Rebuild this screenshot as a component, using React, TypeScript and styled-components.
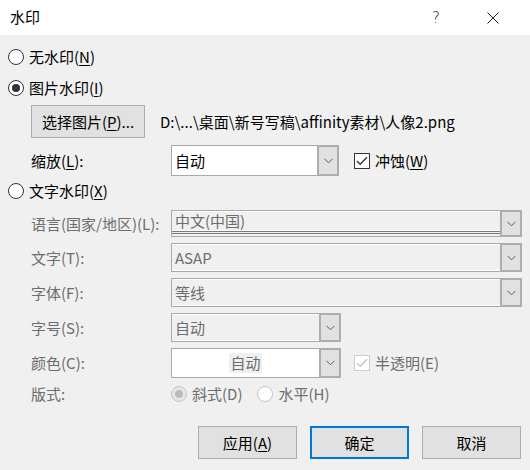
import React from 'react';
import styled, { createGlobalStyle, css } from 'styled-components';

const GlobalStyle = createGlobalStyle`
  html, body { margin: 0; padding: 0; background: #f0f0f0; }
  body {
    font-family: "Noto Sans CJK SC", "Noto Sans", sans-serif;
    font-size: 15px;
    color: #000;
  }
  * { box-sizing: border-box; }
  u { text-underline-offset: 2px; }
`;

const Dialog = styled.div`
  width: 530px;
  height: 470px;
  display: flex;
  flex-direction: column;
  background: #f0f0f0;
  overflow: hidden;
`;

const TitleBar = styled.div`
  height: 35px;
  background: #ffffff;
  display: flex;
  align-items: center;
  padding-left: 10px;
  padding-right: 14px;
  gap: 11px;
`;

const Title = styled.div`
  flex: 1;
  font-size: 15px;
  line-height: 20px;
  margin-top: -2px;
`;

const TitleButton = styled.div`
  width: 46px;
  height: 35px;
  display: flex;
  align-items: center;
  justify-content: center;
  font-family: "DejaVu Sans", sans-serif;
  font-weight: 300;
  font-size: 15px;
  color: #222;
`;

const Body = styled.div`
  flex: 1;
  display: flex;
  flex-direction: column;
  padding: 0 8px 0 8px;
`;

const RadioRow = styled.label<{ $mt: number }>`
  display: flex;
  align-items: center;
  height: 20px;
  gap: 5px;
  margin-top: ${(p) => p.$mt}px;
  line-height: 20px;
  white-space: nowrap;
`;

const RadioCircle = styled.span<{ $checked?: boolean; $disabled?: boolean }>`
  width: 16px;
  height: 16px;
  flex: none;
  border-radius: 50%;
  border: 1px solid ${(p) => (p.$disabled ? '#c4c4c4' : '#333333')};
  background: ${(p) => (p.$disabled && p.$checked ? '#e8e8e8' : '#ffffff')};
  display: flex;
  align-items: center;
  justify-content: center;
  ${(p) =>
    p.$checked &&
    css`
      &::after {
        content: '';
        width: 8px;
        height: 8px;
        border-radius: 50%;
        background: ${p.$disabled ? '#bcbcbc' : '#333333'};
      }
    `}
`;

const PickRow = styled.div`
  display: flex;
  align-items: center;
  margin-top: 7px;
  height: 33px;
  padding-left: 23px;
  gap: 15px;
  white-space: nowrap;
`;

const PushButton = styled.button<{ $width: number; $default?: boolean }>`
  width: ${(p) => p.$width}px;
  height: 33px;
  padding: 0;
  font: inherit;
  font-size: 15px;
  color: #000;
  background: #e1e1e1;
  border: ${(p) => (p.$default ? '2px solid #0078d7' : '1px solid #adadad')};
  display: flex;
  align-items: center;
  justify-content: center;
  line-height: 20px;
`;

const PathText = styled.span`
  line-height: 20px;
  color: #000;
`;

const ScaleRow = styled.div`
  display: grid;
  grid-template-columns: 140px auto auto 1fr;
  align-items: center;
  margin-top: 7px;
  padding-left: 23px;
  column-gap: 0;
`;

const FieldLabel = styled.span<{ $disabled?: boolean }>`
  line-height: 20px;
  white-space: nowrap;
  color: ${(p) => (p.$disabled ? '#6d6d6d' : '#000')};
`;

const FieldGrid = styled.div`
  display: grid;
  grid-template-columns: 140px 1fr;
  row-gap: 6px;
  align-items: center;
  margin-top: 9px;
  padding-left: 23px;
`;

const ComboBox = styled.div<{ $width: number; $height: number; $white?: boolean }>`
  width: ${(p) => p.$width}px;
  height: ${(p) => p.$height}px;
  display: flex;
  border: 1px solid #a9a9a9;
  background: ${(p) => (p.$white ? '#ffffff' : '#f0f0f0')};
`;

const ComboText = styled.div<{
  $disabled?: boolean;
  $center?: boolean;
  $double?: boolean;
  $inset?: boolean;
}>`
  flex: 1;
  display: flex;
  align-items: center;
  justify-content: ${(p) => (p.$center ? 'center' : 'flex-start')};
  padding-left: ${(p) => (p.$center ? '0' : '3px')};
  line-height: 20px;
  color: ${(p) => (p.$disabled ? '#6d6d6d' : '#000')};
  white-space: nowrap;
  ${(p) => p.$inset && css`box-shadow: inset 0 1px 0 #ffffff, inset 0 -1px 0 #ffffff;`}
  ${(p) =>
    p.$double &&
    css`
      border-bottom: 3px double #7a7a7a;
      margin-bottom: 2px;
    `}
`;

const Highlight = styled.span`
  background: #f0f0f0;
  padding: 0 1px;
  line-height: 20px;
`;

const ComboButton = styled.div`
  width: 22px;
  margin: -1px -1px -1px 0;
  background: #e1e1e1;
  border: 2px solid #adadad;
  display: flex;
  align-items: center;
  justify-content: center;
`;

const CheckWrap = styled.label<{ $disabled?: boolean; $ml: number }>`
  display: flex;
  align-items: center;
  gap: 5px;
  margin-left: ${(p) => p.$ml}px;
  line-height: 20px;
  white-space: nowrap;
  color: ${(p) => (p.$disabled ? '#6d6d6d' : '#000')};
`;

const CheckBoxBox = styled.span<{ $disabled?: boolean }>`
  width: 16px;
  height: 16px;
  flex: none;
  border: 1px solid ${(p) => (p.$disabled ? '#cccccc' : '#333333')};
  background: #ffffff;
  display: flex;
  align-items: center;
  justify-content: center;
`;

const InlineRow = styled.div`
  display: flex;
  align-items: center;
`;

const StyleRadios = styled.div`
  display: flex;
  align-items: center;
  height: 20px;
  gap: 15px;
  margin-left: 0px;
`;

const SmallRadio = styled.label`
  display: flex;
  align-items: center;
  gap: 5px;
  color: #6d6d6d;
  line-height: 20px;
  white-space: nowrap;
`;

const ButtonRow = styled.div`
  display: flex;
  justify-content: flex-end;
  gap: 13px;
  margin-top: 22px;
  padding-right: 1px;
`;

const Chevron = () => (
  <svg width="9" height="6" viewBox="0 0 9 6">
    <path d="M0.5 0.8 L4.5 4.8 L8.5 0.8" fill="none" stroke="#5a5a5a" strokeWidth="1" />
  </svg>
);

const Check = ({ color }: { color: string }) => (
  <svg width="12" height="10" viewBox="0 0 12 10">
    <path d="M1 5 L4.2 8.2 L11 1.2" fill="none" stroke={color} strokeWidth="1.4" />
  </svg>
);

type ComboProps = {
  width: number;
  height?: number;
  text: string;
  disabled?: boolean;
  white?: boolean;
  center?: boolean;
  double?: boolean;
  highlight?: boolean;
};

const Combo = ({ width, height = 29, text, disabled, white, center, double, highlight }: ComboProps) => (
  <ComboBox $width={width} $height={height} $white={white}>
    <ComboText $disabled={disabled} $center={center} $double={double} $inset={disabled && !white}>
      {highlight ? <Highlight>{text}</Highlight> : text}
    </ComboText>
    <ComboButton>
      <Chevron />
    </ComboButton>
  </ComboBox>
);

export default function App() {
  return (
    <>
      <GlobalStyle />
      <Dialog>
        <TitleBar>
          <Title>水印</Title>
          <TitleButton>?</TitleButton>
          <TitleButton>
            <svg width="12" height="12" viewBox="0 0 12 12">
              <path d="M0.5 0.5 L11.5 11.5 M11.5 0.5 L0.5 11.5" stroke="#222" strokeWidth="1" />
            </svg>
          </TitleButton>
        </TitleBar>
        <Body>
          <RadioRow $mt={12}>
            <RadioCircle />
            <span>
              无水印(<u>N</u>)
            </span>
          </RadioRow>
          <RadioRow $mt={11}>
            <RadioCircle $checked />
            <span>
              图片水印(<u>I</u>)
            </span>
          </RadioRow>
          <PickRow>
            <PushButton $width={114}>
              选择图片(<u>P</u>)...
            </PushButton>
            <PathText>D:\...\桌面\新号写稿\affinity素材\人像2.png</PathText>
          </PickRow>
          <ScaleRow>
            <FieldLabel>
              缩放(<u>L</u>):
            </FieldLabel>
            <Combo width={168} height={31} text="自动" white />
            <CheckWrap $ml={15}>
              <CheckBoxBox>
                <Check color="#333" />
              </CheckBoxBox>
              <span>
                冲蚀(<u>W</u>)
              </span>
            </CheckWrap>
          </ScaleRow>
          <RadioRow $mt={5}>
            <RadioCircle />
            <span>
              文字水印(<u>X</u>)
            </span>
          </RadioRow>
          <FieldGrid>
            <FieldLabel $disabled>语言(国家/地区)(L):</FieldLabel>
            <Combo width={351} height={27} text="中文(中国)" disabled double />
            <FieldLabel $disabled>文字(T):</FieldLabel>
            <Combo width={351} text="ASAP" disabled />
            <FieldLabel $disabled>字体(F):</FieldLabel>
            <Combo width={351} text="等线" disabled />
            <FieldLabel $disabled>字号(S):</FieldLabel>
            <Combo width={170} text="自动" disabled />
            <FieldLabel $disabled>颜色(C):</FieldLabel>
            <InlineRow>
              <Combo width={170} height={30} text="自动" disabled white center highlight />
              <CheckWrap $disabled $ml={13}>
                <CheckBoxBox $disabled>
                  <Check color="#c8c8c8" />
                </CheckBoxBox>
                <span>半透明(E)</span>
              </CheckWrap>
            </InlineRow>
            <FieldLabel $disabled>版式:</FieldLabel>
            <StyleRadios>
              <SmallRadio>
                <RadioCircle $checked $disabled />
                <span>斜式(D)</span>
              </SmallRadio>
              <SmallRadio>
                <RadioCircle $disabled />
                <span>水平(H)</span>
              </SmallRadio>
            </StyleRadios>
          </FieldGrid>
          <ButtonRow>
            <PushButton $width={99}>
              应用(<u>A</u>)
            </PushButton>
            <PushButton $width={99} $default>
              确定
            </PushButton>
            <PushButton $width={99}>取消</PushButton>
          </ButtonRow>
        </Body>
      </Dialog>
    </>
  );
}
